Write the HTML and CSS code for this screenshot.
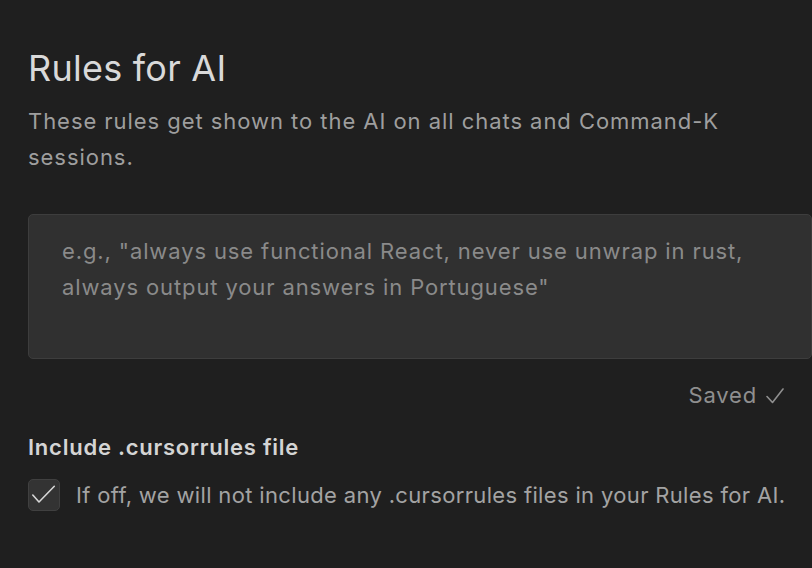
FILE: index.html
```html
<!DOCTYPE html>
<html>
<head>
<meta charset="utf-8">
<link rel="stylesheet" href="styles.css">
</head>
<body>
<div class="page">
  <h1 class="title">Rules for AI</h1>
  <p class="desc">These rules get shown to the AI on all chats and Command-K sessions.</p>
  <div class="rules-box">
    <div class="placeholder">e.g., "always use functional React, never use unwrap in rust, always output your answers in Portuguese"</div>
  </div>
  <div class="status-row">
    <span class="saved">Saved</span>
    <svg class="saved-check" width="18" height="16" viewBox="0 0 18 16"><path d="M1 8.5 L6.5 14.5 L17 1" fill="none" stroke="#8f8f8f" stroke-width="1.6" stroke-linecap="round" stroke-linejoin="round"/></svg>
  </div>
  <h2 class="section">Include .cursorrules file</h2>
  <label class="check-row">
    <span class="checkbox">
      <svg width="30" height="30" viewBox="0 0 30 30"><path d="M3.8 15 L10 22 L25.3 6.3" fill="none" stroke="#d6d6d6" stroke-width="1.6" stroke-linecap="round" stroke-linejoin="round"/></svg>
    </span>
    <span class="check-label">If off, we will not include any .cursorrules files in your Rules for AI.</span>
  </label>
</div>
</body>
</html>
```

FILE: styles.css
```css
html, body {
  margin: 0;
  padding: 0;
  background: #1f1f1f;
  height: 100%;
  overflow: hidden;
}
body {
  font-family: Inter, "Noto Sans", sans-serif;
  -webkit-font-smoothing: antialiased;
}
.page {
  padding: 44px 0 0 28px;
}
.title {
  margin: 0;
  font-size: 36px;
  font-weight: 400;
  line-height: 48px;
  color: #d9d9d9;
  letter-spacing: 0.25px;
}
.desc {
  margin: 11px 0 0 0;
  width: 740px;
  font-size: 22px;
  line-height: 36px;
  color: #9e9e9e;
  letter-spacing: 0.95px;
}
.rules-box {
  margin-top: 39px;
  background: #303030;
  border: 1px solid #3d3d3d;
  border-radius: 5px;
  padding: 18px 34px 0 33px;
  box-sizing: border-box;
  height: 145px;
}
.placeholder {
  font-size: 22px;
  line-height: 36px;
  color: #8a8a8a;
  letter-spacing: 0.88px;
}
.status-row {
  display: flex;
  justify-content: flex-end;
  align-items: center;
  gap: 9px;
  padding-right: 28px;
  margin-top: 18px;
}
.saved {
  font-size: 22px;
  line-height: 36px;
  color: #8f8f8f;
  letter-spacing: 0.8px;
}
.saved-check {
  display: block;
  margin-top: 1px;
}
.section {
  margin: 16px 0 0 0;
  font-size: 22px;
  font-weight: 600;
  line-height: 36px;
  color: #d4d4d4;
  letter-spacing: 0.76px;
}
.check-row {
  display: flex;
  align-items: center;
  gap: 16px;
  margin-top: 12px;
}
.checkbox {
  width: 30px;
  height: 30px;
  border-radius: 5px;
  background: #333333;
  border: 1px solid #404040;
  display: flex;
  align-items: center;
  justify-content: center;
  flex-shrink: 0;
}
.check-label {
  font-size: 22px;
  line-height: 36px;
  color: #a3a3a3;
  letter-spacing: 0.34px;
}
```
